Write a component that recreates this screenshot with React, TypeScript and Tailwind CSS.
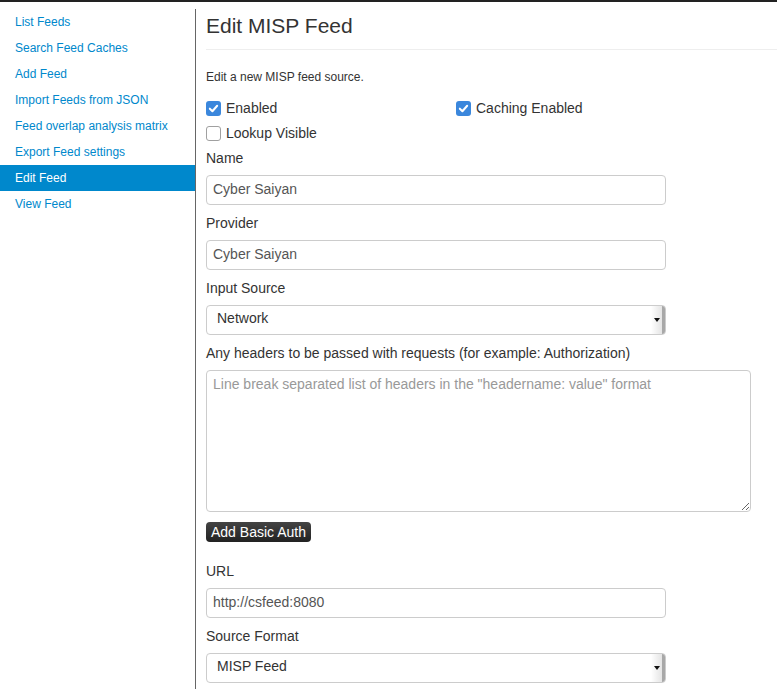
import React from "react";

const menuItems = [
  "List Feeds",
  "Search Feed Caches",
  "Add Feed",
  "Import Feeds from JSON",
  "Feed overlap analysis matrix",
  "Export Feed settings",
  "Edit Feed",
  "View Feed",
];

const Check: React.FC<{ checked: boolean; label: string }> = ({ checked, label }) => (
  <label className="flex items-center h-[25px] text-[14px] text-[#333]">
    {checked ? (
      <span className="w-[15px] h-[15px] rounded-[3px] bg-[#3b87dc] flex items-center justify-center">
        <svg width="11" height="11" viewBox="0 0 12 12">
          <path d="M2 6.2 L4.8 9 L10 3" fill="none" stroke="white" strokeWidth="2.2" strokeLinecap="round" strokeLinejoin="round" />
        </svg>
      </span>
    ) : (
      <span className="w-[15px] h-[15px] rounded-[3px] border border-[#a0a0a0] bg-white" />
    )}
    <span className="ml-[5px]">{label}</span>
  </label>
);

const FieldLabel: React.FC<{ children: React.ReactNode }> = ({ children }) => (
  <div className="h-[24px] leading-[24px] text-[14px] text-[#333] mb-[5px]">{children}</div>
);

const TextInput: React.FC<{ value: string }> = ({ value }) => (
  <div className="w-[460px] h-[30px] border border-[#ccc] rounded-[4px] px-[6px] pb-[2px] flex items-center text-[14px] text-[#555] mb-[6px]">
    {value}
  </div>
);

const SelectBox: React.FC<{ value: string }> = ({ value }) => (
  <div className="w-[460px] h-[30px] border border-[#ccc] rounded-[4px] flex items-center text-[14px] text-[#333] mb-[6px] overflow-hidden">
    <span className="flex-1 pl-[10px] pb-[3px]">{value}</span>
    <div className="w-[14px] h-full bg-gradient-to-r from-white to-[#e4e4e4] border-r-[3px] border-[#a8a8a8] flex items-center justify-center">
      <svg width="6" height="4" viewBox="0 0 6 4">
        <path d="M0 0 H6 L3 4 Z" fill="#111" />
      </svg>
    </div>
  </div>
);

export default function App() {
  return (
    <div className="min-h-screen bg-white font-['Liberation_Sans',Arial,sans-serif] text-[#333]">
      <div className="h-[2px] bg-[#222]" />
      <div className="flex">
        <aside className="w-[195px] shrink-0 pt-[7px]">
          {menuItems.map((item) => (
            <div
              key={item}
              className={`h-[26px] leading-[26px] px-[15px] text-[12px] ${
                item === "Edit Feed" ? "bg-[#0088cc] text-white" : "text-[#0088cc]"
              }`}
            >
              {item}
            </div>
          ))}
        </aside>

        <main className="flex-1 mt-[7px] border-l border-[#666] min-h-[680px]">
          <h2 className="pl-[10px] mt-[2px] text-[21px] leading-[30px] text-[#333]">Edit MISP Feed</h2>
          <div className="ml-[10px] mt-[8px] border-t border-[#eee]" />

          <div className="pl-[10px]">
            <p className="mt-[18px] text-[12px] leading-[18px]">Edit a new MISP feed source.</p>

            <div className="mt-[10px] flex">
              <div className="w-[250px]">
                <Check checked label="Enabled" />
              </div>
              <Check checked label="Caching Enabled" />
            </div>
            <Check checked={false} label="Lookup Visible" />

            <FieldLabel>Name</FieldLabel>
            <TextInput value="Cyber Saiyan" />

            <FieldLabel>Provider</FieldLabel>
            <TextInput value="Cyber Saiyan" />

            <FieldLabel>Input Source</FieldLabel>
            <SelectBox value="Network" />

            <FieldLabel>Any headers to be passed with requests (for example: Authorization)</FieldLabel>
            <textarea
              readOnly
              placeholder={'Line break separated list of headers in the "headername: value" format'}
              className="block w-[545px] h-[142px] border border-[#ccc] rounded-[4px] px-[6px] py-[3px] text-[14px] leading-[20px] text-[#555] placeholder:text-[#999] outline-none"
            />

            <button className="mt-[10px] h-[20px] px-[5px] rounded-[4px] bg-gradient-to-b from-[#444] to-[#222] text-white text-[14px] leading-[20px]">
              Add Basic Auth
            </button>

            <div className="mt-[15px]" />
            <FieldLabel>URL</FieldLabel>
            <TextInput value="http://csfeed:8080" />

            <FieldLabel>Source Format</FieldLabel>
            <SelectBox value="MISP Feed" />
          </div>
        </main>
      </div>
    </div>
  );
}
